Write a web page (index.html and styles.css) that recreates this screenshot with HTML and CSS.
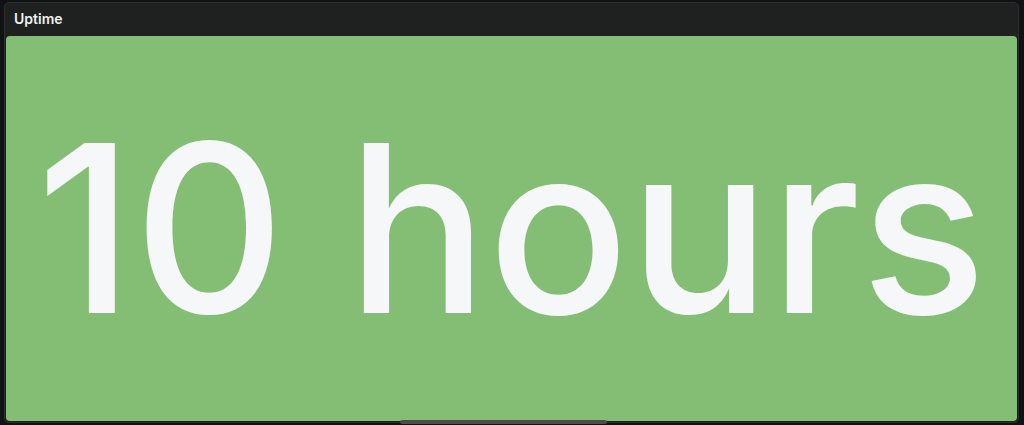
FILE: index.html
```html
<!DOCTYPE html>
<html>
<head>
<meta charset="utf-8">
<link rel="stylesheet" href="styles.css">
</head>
<body>
<div class="panel">
  <div class="panel-header"><span class="panel-title">Uptime</span></div>
  <div class="stat">
    <span class="stat-value">10 hours</span>
  </div>
  <div class="scroll-thumb"></div>
</div>
</body>
</html>
```
FILE: styles.css
```css
html, body {
  margin: 0;
  padding: 0;
  background: #111213;
  width: 1024px;
  height: 425px;
  overflow: hidden;
  font-family: Inter, "Noto Sans", sans-serif;
}
.panel {
  position: relative;
  box-sizing: border-box;
  margin: 2px 5px 0 4px;
  height: 421px;
  background: #1e2120;
  border: 1px solid #2b2e2d;
  border-radius: 5px;
  padding: 0 1px 1px 1px;
  display: flex;
  flex-direction: column;
}
.panel-header {
  height: 33px;
  display: flex;
  align-items: center;
  padding-left: 8px;
}
.panel-title {
  color: #eef0f0;
  font-size: 14px;
  font-weight: 600;
  position: relative;
  top: -1px;
}
.stat {
  flex: 1;
  background: #84be74;
  border-radius: 4px;
  display: flex;
  align-items: center;
  justify-content: center;
  overflow: hidden;
}
.stat-value {
  color: #f6f7f9;
  font-size: 234px;
  font-weight: 500;
  line-height: 1;
  letter-spacing: 0;
  position: relative;
  top: -1px;
}
.scroll-thumb {
  position: absolute;
  left: 395px;
  width: 207px;
  bottom: -2px;
  height: 4px;
  border-radius: 2px;
  background: #4b4e4d;
}
```
